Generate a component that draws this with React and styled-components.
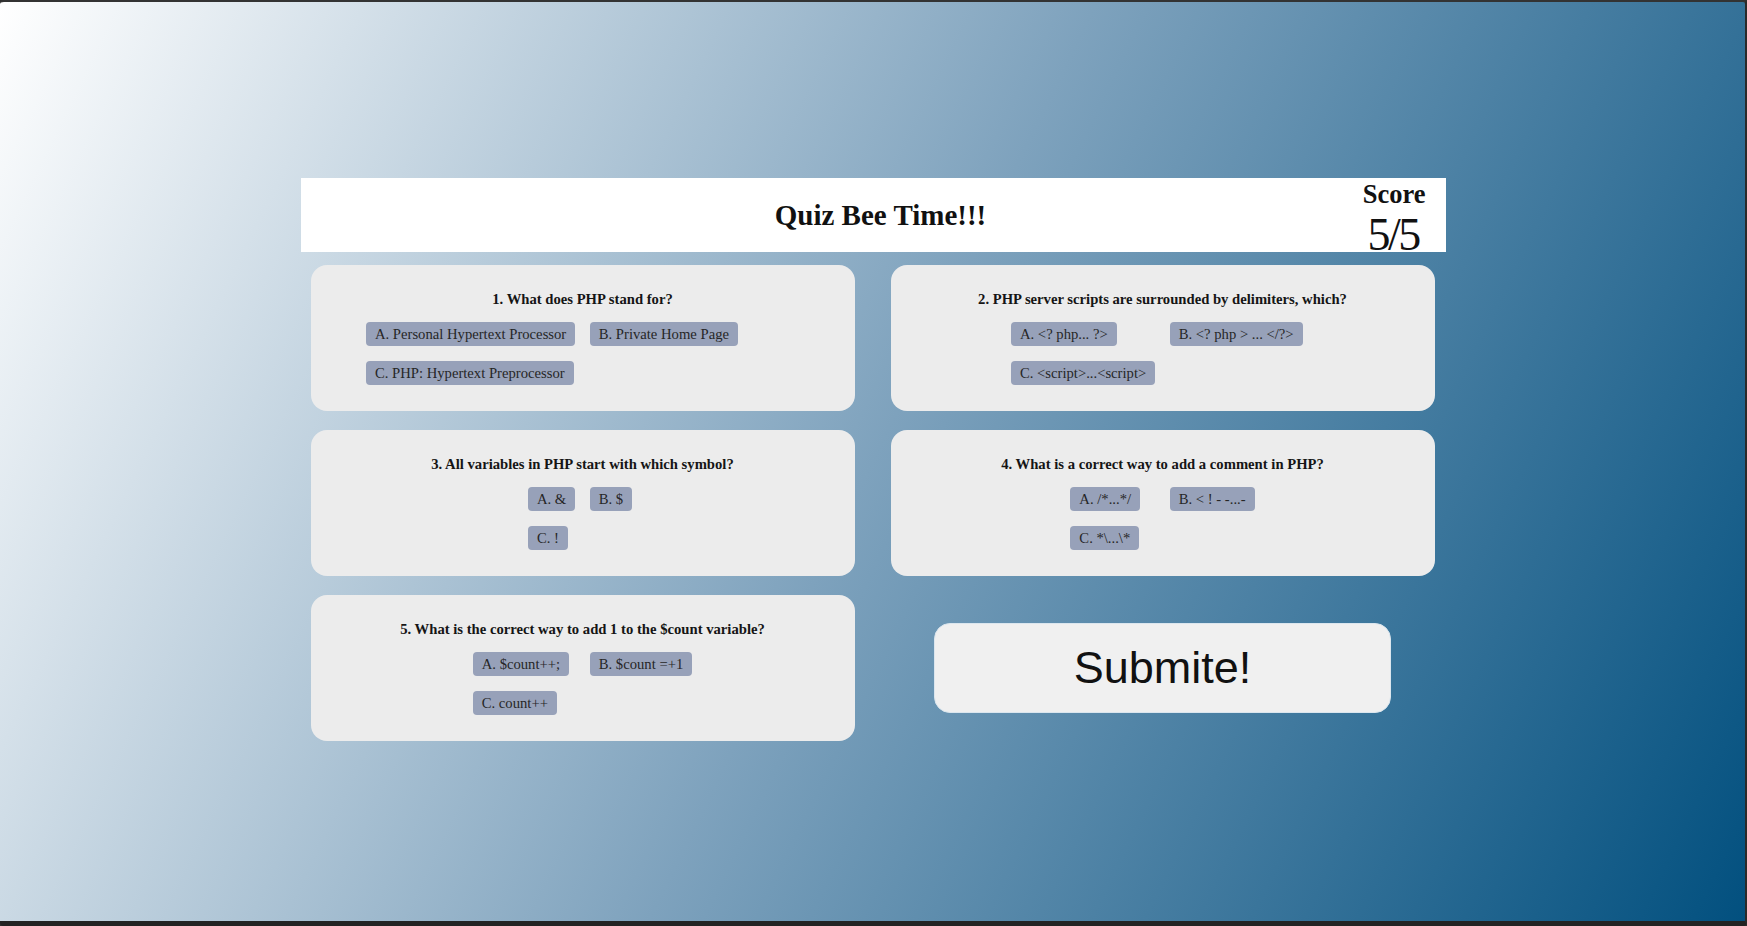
import styled, { createGlobalStyle } from "styled-components";

const questions = [
  {
    id: 1,
    text: "1. What does PHP stand for?",
    options: [
      "A. Personal Hypertext Processor",
      "B. Private Home Page",
      "C. PHP: Hypertext Preprocessor",
    ],
  },
  {
    id: 2,
    text: "2. PHP server scripts are surrounded by delimiters, which?",
    options: ["A. <? php... ?>", "B. <? php > ... </?>", "C. <script>...<script>"],
  },
  {
    id: 3,
    text: "3. All variables in PHP start with which symbol?",
    options: ["A. &", "B. $", "C. !"],
  },
  {
    id: 4,
    text: "4. What is a correct way to add a comment in PHP?",
    options: ["A. /*...*/", "B. < ! - -...-", "C. *\\...\\*"],
  },
  {
    id: 5,
    text: "5. What is the correct way to add 1 to the $count variable?",
    options: ["A. $count++;", "B. $count =+1", "C. count++"],
  },
];

export default function App() {
  return (
    <>
      <GlobalStyle />
      <Frame>
        <Main>
          <Header>
            <Title>Quiz Bee Time!!!</Title>
            <ScoreBox>
              <ScoreLabel>Score</ScoreLabel>
              <ScoreValue>5/5</ScoreValue>
            </ScoreBox>
          </Header>
          <QuestionGrid>
            {questions.map((q) => (
              <QuestionCard key={q.id}>
                <QuestionText>{q.text}</QuestionText>
                <Options>
                  {q.options.map((opt) => (
                    <OptionButton key={opt}>{opt}</OptionButton>
                  ))}
                </Options>
              </QuestionCard>
            ))}
            <SubmitCell>
              <SubmitButton>Submite!</SubmitButton>
            </SubmitCell>
          </QuestionGrid>
        </Main>
      </Frame>
    </>
  );
}

const GlobalStyle = createGlobalStyle`
  * {
    box-sizing: border-box;
  }

  body {
    margin: 0;
    background: #2f2f2f;
    font-family: "Liberation Serif", "Times New Roman", serif;
  }
`;

const Frame = styled.div`
  height: 100vh;
  padding-left: 1px;
  border-top: 2px solid #333;
  border-right: 2px solid #2a2a2a;
  border-bottom: 5px solid #232323;
  border-radius: 4px;
  background: linear-gradient(116deg, #ffffff 0%, #7ea2bd 50%, #02507f 100%);
  overflow: hidden;
`;

const Main = styled.div`
  width: 1145px;
  margin: 0 auto;
  padding-top: 176px;
`;

const Header = styled.header`
  height: 74px;
  background: #fff;
  display: grid;
  grid-template-columns: 1fr auto 1fr;
  align-items: center;
  padding-left: 15px;
`;

const Title = styled.h1`
  grid-column: 2;
  margin: 0 0 4px;
  font-size: 29px;
  font-weight: bold;
  color: #111;
`;

const ScoreBox = styled.div`
  grid-column: 3;
  justify-self: end;
  align-self: start;
  display: flex;
  flex-direction: column;
  align-items: center;
  padding: 3px 20px 0 0;
  color: #111;
  line-height: 1;
`;

const ScoreLabel = styled.span`
  font-size: 26.5px;
  font-weight: bold;
`;

const ScoreValue = styled.span`
  margin-top: 4px;
  font-size: 46px;
  letter-spacing: -2.5px;
  padding-right: 2px;
`;

const QuestionGrid = styled.div`
  display: grid;
  grid-template-columns: 544px 544px;
  grid-auto-rows: 146px;
  column-gap: 36px;
  row-gap: 19px;
  padding: 0 10px;
  margin-top: 13px;
`;

const QuestionCard = styled.section`
  background: #ececec;
  border-radius: 16px;
  display: flex;
  flex-direction: column;
  justify-content: center;
  align-items: center;
`;

const QuestionText = styled.p`
  margin: 0 0 14.5px;
  font-size: 14.67px;
  font-weight: bold;
  color: #151515;
`;

const Options = styled.div`
  display: grid;
  grid-template-columns: 1fr 1fr;
  column-gap: 14.5px;
  row-gap: 15px;
  width: fit-content;
`;

const OptionButton = styled.button`
  justify-self: start;
  height: 24px;
  padding: 0 9px;
  border: none;
  border-radius: 4px;
  background: #97a1b9;
  color: #262626;
  font-family: "Liberation Serif", "Times New Roman", serif;
  font-size: 14.67px;
  line-height: 24px;
  white-space: nowrap;
  cursor: pointer;
`;

const SubmitCell = styled.div`
  display: flex;
  align-items: center;
  justify-content: center;
`;

const SubmitButton = styled.button`
  width: 457px;
  height: 90px;
  border: 1px solid #dbe6ee;
  border-radius: 16px;
  background: #f0f0f0;
  color: #111;
  font-family: "Liberation Sans", Arial, sans-serif;
  font-size: 45px;
  cursor: pointer;
`;
